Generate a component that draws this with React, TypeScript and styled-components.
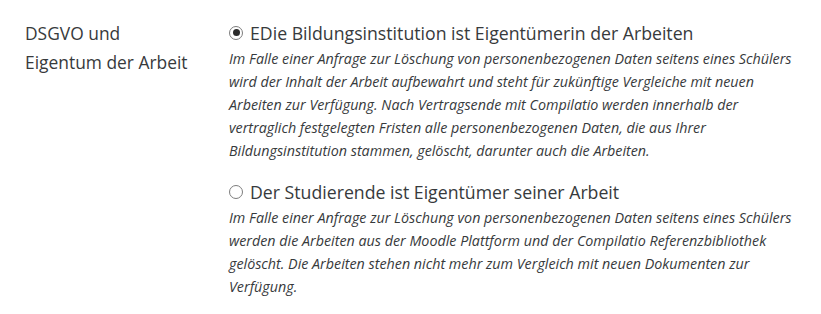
import React from 'react';
import styled, { createGlobalStyle } from 'styled-components';

const GlobalStyle = createGlobalStyle`
  html, body {
    margin: 0;
    padding: 0;
    background: #ffffff;
  }
  body {
    font-family: 'Open Sans', 'Noto Sans', sans-serif;
    color: #373a3c;
  }
`;

const FormRow = styled.div`
  display: flex;
  padding: 19px 0 0 25px;
`;

const FieldLabel = styled.div`
  width: 204px;
  flex: none;
  font-size: 17.4px;
  line-height: 28.5px;
  color: #373a3c;
`;

const Options = styled.div`
  display: flex;
  flex-direction: column;
  gap: 16px;
`;

const Option = styled.label`
  display: flex;
  flex-direction: column;
`;

const OptionHead = styled.span`
  display: flex;
  align-items: center;
  gap: 7px;
  font-size: 17.7px;
  line-height: 28px;
`;

const Radio = styled.span<{ checked?: boolean }>`
  width: 14px;
  height: 14px;
  box-sizing: border-box;
  border-radius: 50%;
  border: 1.5px solid #7d7d7d;
  background: #ffffff;
  display: flex;
  align-items: center;
  justify-content: center;
  flex: none;
  margin-top: -1px;

  &::after {
    content: '';
    width: 7px;
    height: 7px;
    border-radius: 50%;
    background: ${({ checked }) => (checked ? '#2b2b2b' : 'transparent')};
  }
`;

const Description = styled.p`
  margin: 0;
  font-size: 14.3px;
  font-style: italic;
  line-height: 23px;
  color: #373a3c;
  white-space: nowrap;
`;

const options = [
  {
    title: 'EDie Bildungsinstitution ist Eigentümerin der Arbeiten',
    checked: true,
    text: [
      'Im Falle einer Anfrage zur Löschung von personenbezogenen Daten seitens eines Schülers',
      'wird der Inhalt der Arbeit aufbewahrt und steht für zukünftige Vergleiche mit neuen',
      'Arbeiten zur Verfügung. Nach Vertragsende mit Compilatio werden innerhalb der',
      'vertraglich festgelegten Fristen alle personenbezogenen Daten, die aus Ihrer',
      'Bildungsinstitution stammen, gelöscht, darunter auch die Arbeiten.',
    ],
  },
  {
    title: 'Der Studierende ist Eigentümer seiner Arbeit',
    checked: false,
    text: [
      'Im Falle einer Anfrage zur Löschung von personenbezogenen Daten seitens eines Schülers',
      'werden die Arbeiten aus der Moodle Plattform und der Compilatio Referenzbibliothek',
      'gelöscht. Die Arbeiten stehen nicht mehr zum Vergleich mit neuen Dokumenten zur',
      'Verfügung.',
    ],
  },
];

const App: React.FC = () => {
  return (
    <>
      <GlobalStyle />
      <FormRow>
        <FieldLabel>
          DSGVO und
          <br />
          Eigentum der Arbeit
        </FieldLabel>
        <Options>
          {options.map((opt) => (
            <Option key={opt.title}>
              <OptionHead>
                <Radio checked={opt.checked} />
                {opt.title}
              </OptionHead>
              <Description>
                {opt.text.map((line, i) => (
                  <React.Fragment key={i}>
                    {line}
                    {i < opt.text.length - 1 && <br />}
                  </React.Fragment>
                ))}
              </Description>
            </Option>
          ))}
        </Options>
      </FormRow>
    </>
  );
};

export default App;
